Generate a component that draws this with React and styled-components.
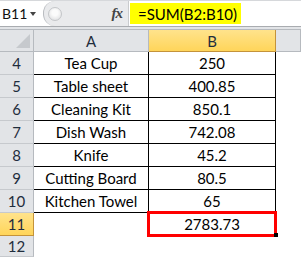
import React from "react";
import styled, { createGlobalStyle } from "styled-components";

const Global = createGlobalStyle`
  html, body { margin: 0; padding: 0; background: #fff; }
  body { width: 301px; height: 257px; overflow: hidden; font-family: Lato, "Liberation Sans", sans-serif; }
`;

const Page = styled.div`
  width: 301px;
  height: 257px;
  display: flex;
  flex-direction: column;
  background: #e2e4e7;
  overflow: hidden;
`;

const FormulaBar = styled.div`
  display: flex;
  border-top: 1px solid #d6d8db;
  border-bottom: 1px solid #a9acb0;
  background: #fff;
  box-sizing: border-box;
  height: 27px;
`;

const NameBox = styled.div`
  width: 43px;
  display: flex;
  align-items: center;
  justify-content: space-between;
  padding: 0 7px 0 2px;
  box-sizing: border-box;
  font-size: 14px;
  color: #111;
`;

const Caret = styled.span`
  width: 0;
  height: 0;
  border-left: 3.5px solid transparent;
  border-right: 3.5px solid transparent;
  border-top: 4px solid #444;
  margin-top: 1px;
`;

const Splitter = styled.div`
  width: 85px;
  background: #e9eaec;
  border-radius: 12px 0 0 12px;
  border-left: 1px solid #b9bcc0;
  display: flex;
  align-items: center;
  justify-content: space-between;
  padding: 0 6px 0 4px;
  box-sizing: border-box;
`;

const Grip = styled.div`
  width: 14px;
  height: 14px;
  border-radius: 50%;
  background: radial-gradient(circle at 50% 40%, #fbfbfb 30%, #d8d9db 100%);
  border: 1px solid #c4c6c9;
  box-sizing: border-box;
`;

const Fx = styled.span`
  font-family: "Liberation Serif", serif;
  font-style: italic;
  font-weight: bold;
  font-size: 15px;
  color: #444;
  letter-spacing: -1px;
`;

const Input = styled.div`
  flex: 1;
  display: flex;
  align-items: center;
  padding-left: 1px;
  border-left: 1px solid #c9cbce;
`;

const Highlight = styled.span`
  background: #ffff00;
  height: 21px;
  width: 111px;
  box-sizing: border-box;
  padding-left: 8px;
  display: flex;
  align-items: center;
  font-size: 15px;
  color: #000;
`;

const Grid = styled.div`
  margin-top: 2px;
  display: grid;
  grid-template-columns: 34px 115px 127px 1fr;
  grid-template-rows: 22px repeat(8, 23px) 1fr;
  flex: 1;
  background: #fff;
  border-top: 1px solid #b6babf;
`;

const Corner = styled.div`
  position: relative;
  background: #e2e4e7;
  border-right: 1px solid #b6babf;
  border-bottom: 1px solid #b6babf;
  overflow: hidden;
  &::after {
    content: "";
    position: absolute;
    right: 3px;
    bottom: 3px;
    border-left: 14px solid transparent;
    border-bottom: 14px solid #c6c9cd;
  }
`;

const ColHead = styled.div`
  display: flex;
  align-items: center;
  justify-content: center;
  font-size: 15px;
  color: #1f2d3d;
  background: ${(p) => (p.$active ? "linear-gradient(#ffe38c, #ffd55a)" : "#e2e4e7")};
  border-right: 1px solid ${(p) => (p.$active ? "#c4933a" : "#b6babf")};
  border-bottom: 1px solid ${(p) => (p.$active ? "#c4933a" : "#b6babf")};
`;

const RowHead = styled.div`
  display: flex;
  align-items: center;
  justify-content: center;
  font-size: 15px;
  color: #1f2d3d;
  background: ${(p) => (p.$active ? "linear-gradient(#ffe38c, #ffd55a)" : "#e2e4e7")};
  border-right: 1px solid ${(p) => (p.$active ? "#c4933a" : "#b6babf")};
  border-bottom: 1px solid ${(p) => (p.$active ? "#c4933a" : "#c6c9cd")};
`;

const Cell = styled.div`
  position: relative;
  display: flex;
  align-items: center;
  justify-content: center;
  font-size: 15px;
  color: #000;
  border-right: 1px solid ${(p) => (p.$lined ? "#000" : "transparent")};
  border-bottom: 1px solid ${(p) => (p.$lined ? "#000" : "transparent")};
`;

const Selection = styled.div`
  position: absolute;
  left: -2px;
  top: -2px;
  width: 130px;
  height: 26px;
  border: 3px solid #ff0000;
  box-sizing: border-box;
`;

const Handle = styled.div`
  position: absolute;
  right: -3px;
  bottom: -2px;
  width: 4px;
  height: 4px;
  background: #000;
`;

const rows = [
  [4, "Tea Cup", "250"],
  [5, "Table sheet", "400.85"],
  [6, "Cleaning Kit", "850.1"],
  [7, "Dish Wash", "742.08"],
  [8, "Knife", "45.2"],
  [9, "Cutting Board", "80.5"],
  [10, "Kitchen Towel", "65"],
];

export default function App() {
  return (
    <>
      <Global />
      <Page>
        <FormulaBar>
          <NameBox>
            B11 <Caret />
          </NameBox>
          <Splitter>
            <Grip />
            <Fx>fx</Fx>
          </Splitter>
          <Input>
            <Highlight>=SUM(B2:B10)</Highlight>
          </Input>
        </FormulaBar>
        <Grid>
          <Corner />
          <ColHead>A</ColHead>
          <ColHead $active>B</ColHead>
          <ColHead />
          {rows.map(([n, a, b]) => (
            <React.Fragment key={n}>
              <RowHead>{n}</RowHead>
              <Cell $lined>{a}</Cell>
              <Cell $lined>{b}</Cell>
              <Cell />
            </React.Fragment>
          ))}
          <RowHead $active>11</RowHead>
          <Cell />
          <Cell>
            2783.73
            <Selection />
            <Handle />
          </Cell>
          <Cell />
          <RowHead>12</RowHead>
          <Cell />
          <Cell />
          <Cell />
        </Grid>
      </Page>
    </>
  );
}
